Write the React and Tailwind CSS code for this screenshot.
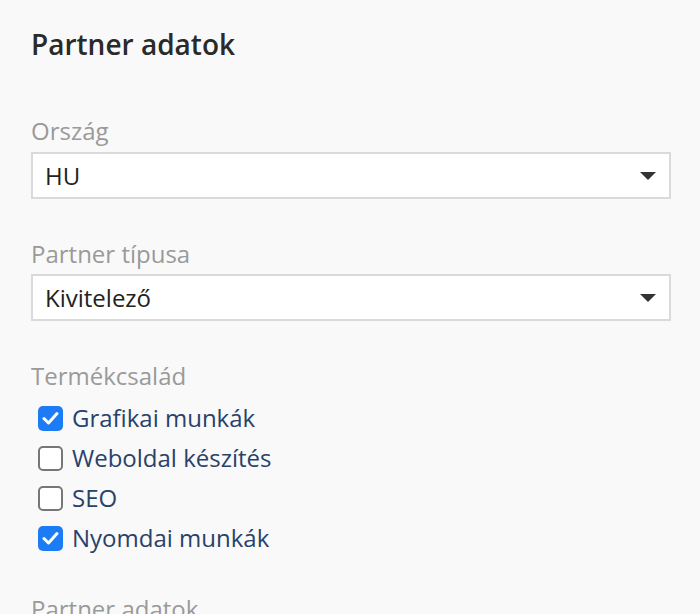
import { useState } from 'react';

const Caret = () => (
    <svg width="16" height="8" viewBox="0 0 16 8" className="absolute right-[13px] top-1/2 -translate-y-1/2">
        <path d="M0 0 H16 L8 8 Z" fill="#333" />
    </svg>
);

const Select = ({ value }) => (
    <div className="relative h-[47px] bg-white border-2 border-[#dadada] flex items-center pl-[12px] text-[24px] text-[#222]">
        {value}
        <Caret />
    </div>
);

const Check = ({ checked, label, onToggle }) => (
    <label className="flex items-center h-[40px] cursor-pointer" onClick={onToggle}>
        <span className="ml-[7px] mr-[9px] w-[25px] h-[25px] flex items-center justify-center">
            {checked ? (
                <span className="w-[25px] h-[25px] rounded-[5px] bg-[#1b7cf6] flex items-center justify-center">
                    <svg width="17" height="14" viewBox="0 0 17 14">
                        <path d="M2 7.5 L6.5 12 L15 2.5" stroke="#fff" strokeWidth="3" fill="none" strokeLinecap="round" strokeLinejoin="round" />
                    </svg>
                </span>
            ) : (
                <span className="w-[25px] h-[25px] rounded-[5px] border-2 border-[#777] bg-white" />
            )}
        </span>
        <span className="text-[24px] text-[#28426a]">{label}</span>
    </label>
);

const App = () => {
    const [products, setProducts] = useState([
        { name: 'Grafikai munkák', on: true },
        { name: 'Weboldal készítés', on: false },
        { name: 'SEO', on: false },
        { name: 'Nyomdai munkák', on: true },
    ]);

    const toggle = (i) => setProducts(p => p.map((x, j) => (j === i ? { ...x, on: !x.on } : x)));

    return (
        <div className="w-[700px] h-[614px] overflow-hidden bg-[#f9f9f9] px-[31px] pr-[29px] font-['Open_Sans',sans-serif]">
            <h1 className="pt-[26px] text-[28px] font-semibold text-[#2a2a2a] leading-[36px]">Partner adatok</h1>

            <div className="mt-[53px]">
                <div className="text-[24px] text-[#9a9a9a] leading-[32px] mb-[5px]">Ország</div>
                <Select value="HU" />
            </div>

            <div className="mt-[39px]">
                <div className="text-[24px] text-[#9a9a9a] leading-[32px] mb-[4px]">Partner típusa</div>
                <Select value="Kivitelező" />
            </div>

            <div className="mt-[39px]">
                <div className="text-[24px] text-[#9a9a9a] leading-[32px] mb-[6px]">Termékcsalád</div>
                {products.map((p, i) => (
                    <Check key={p.name} checked={p.on} label={p.name} onToggle={() => toggle(i)} />
                ))}
            </div>

            <div className="mt-[35px] text-[24px] text-[#9a9a9a] leading-[32px]">Partner adatok</div>
        </div>
    );
};

export default App;
